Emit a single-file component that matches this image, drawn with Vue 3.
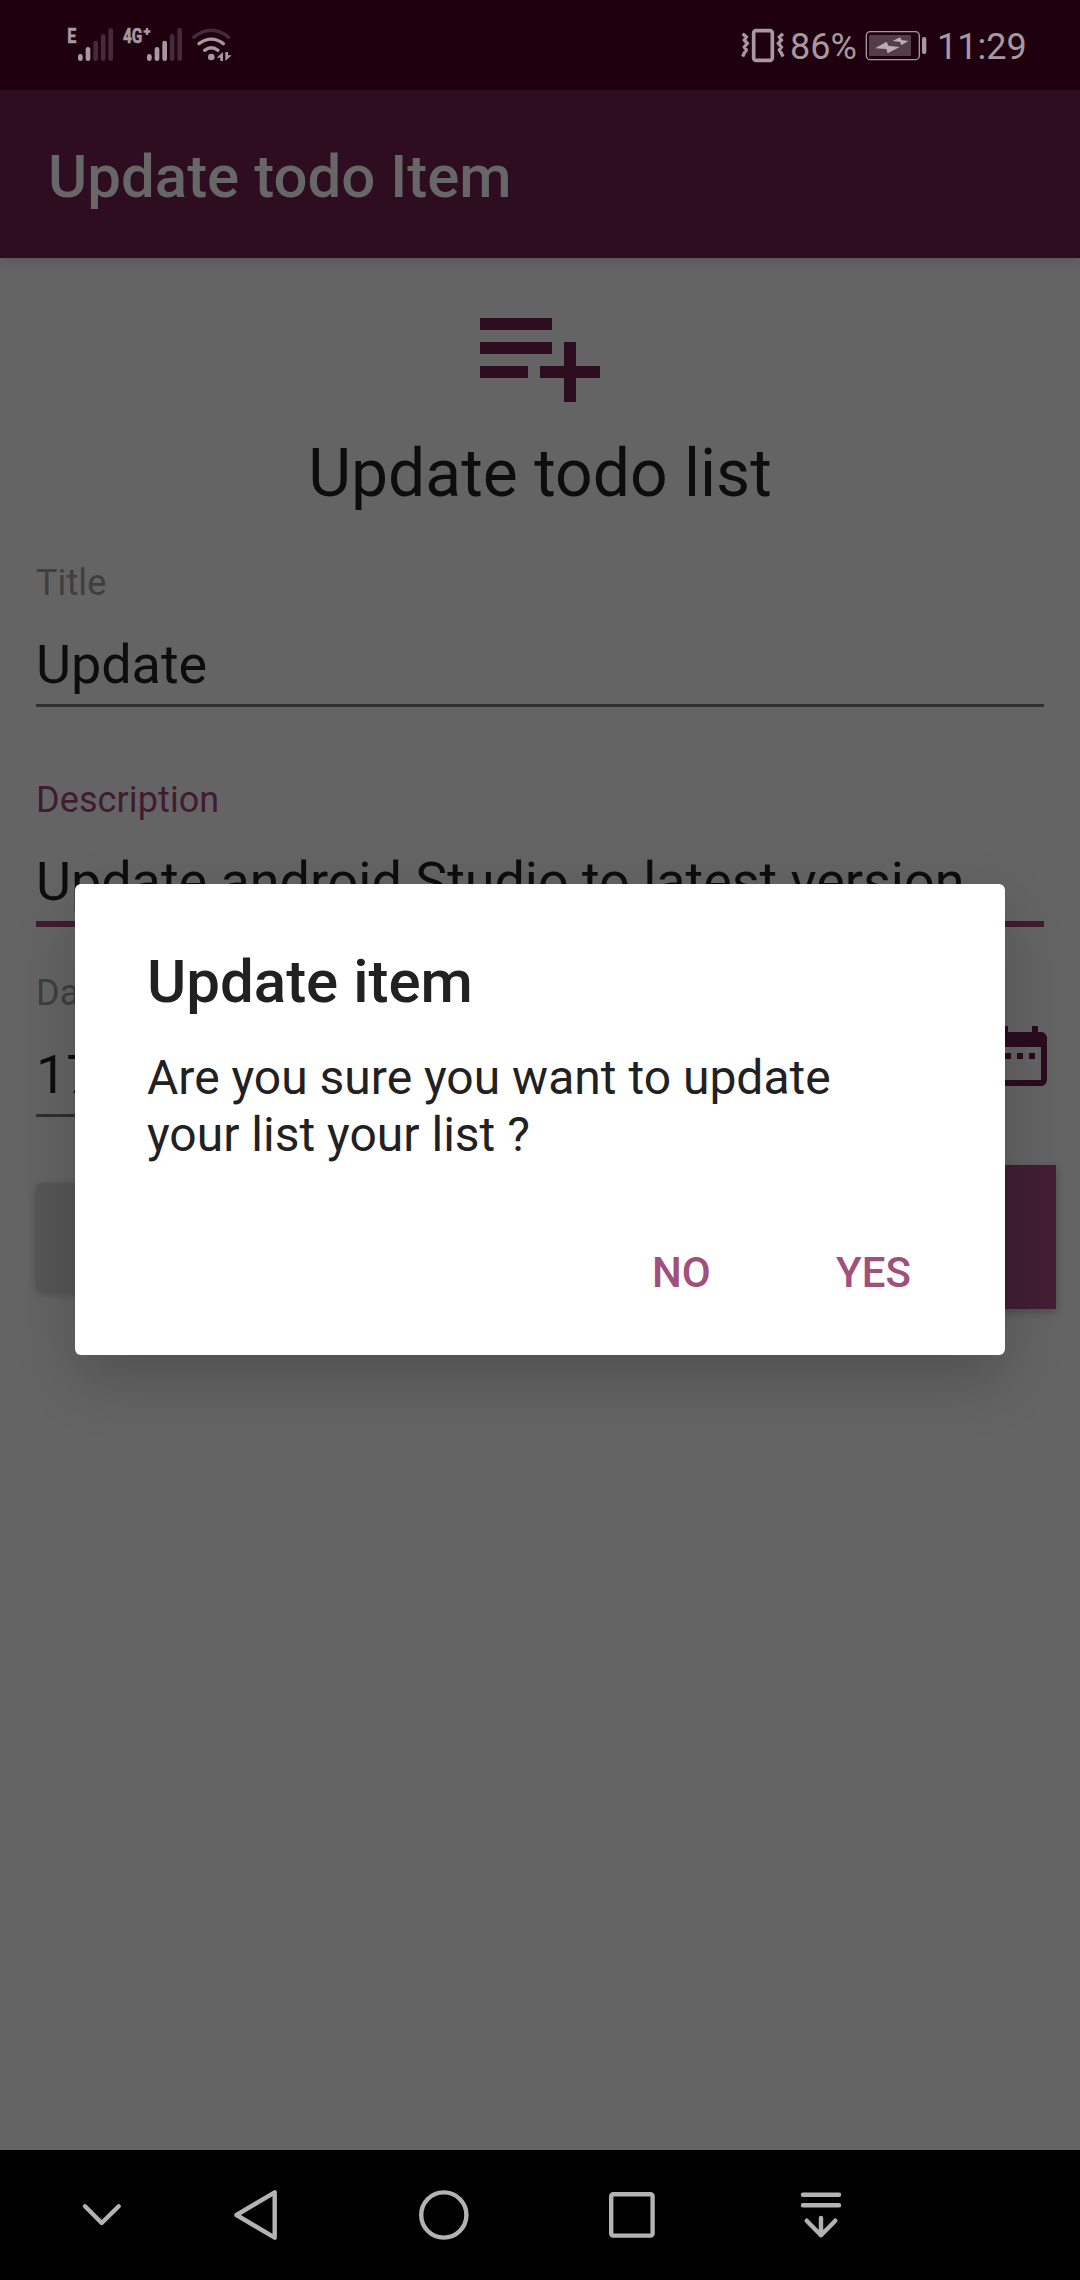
<script setup>
const fields = [
  { label: 'Title', value: 'Update', kind: 'first' },
  { label: 'Description', value: 'Update android Studio to latest version', kind: 'active' },
]
const firstBars = [
  { x: 91, top: 132, on: true },
  { x: 114, top: 111, on: true },
  { x: 137, top: 92, on: false },
  { x: 159.5, top: 72, on: false },
  { x: 182, top: 54, on: false },
]
const secondBars = [
  { x: 298, top: 132, on: true },
  { x: 321, top: 111, on: true },
  { x: 344, top: 92, on: true },
  { x: 366.5, top: 72, on: false },
  { x: 389, top: 54, on: false },
]
</script>

<template>
  <div class="screen">
    <header class="status">
      <svg class="sim-one" viewBox="48 45 144 114" width="48" height="38">
        <text x="52" y="99" class="net" textLength="27" lengthAdjust="spacingAndGlyphs">E</text>
        <rect v-for="b in firstBars" :key="b.x" :x="b.x - 7" :y="b.top" width="14" :height="153 - b.top" rx="7" :class="b.on ? 'lit' : 'unlit'" />
      </svg>
      <svg class="sim-two" viewBox="216 45 186 114" width="62" height="38">
        <text x="219" y="99" class="net" textLength="58" lengthAdjust="spacingAndGlyphs">4G</text>
        <path d="M291 54v21M280.500 64.500h21" class="plus" />
        <rect v-for="b in secondBars" :key="b.x" :x="b.x - 7" :y="b.top" width="14" :height="153 - b.top" rx="7" :class="b.on ? 'lit' : 'unlit'" />
      </svg>
      <svg class="wifi" viewBox="420 45 126 114" width="42" height="38">
        <path d="M431 82Q484 40 536 82" class="arc faint" />
        <path d="M447 101Q484 74 520 101" class="arc" />
        <path d="M464 121Q484 105 504 121" class="arc" />
        <circle cx="484" cy="141" r="10" class="lit" />
        <path d="M519 126v27h-8v-10h-11zM526 153v-27h8v10h11z" class="lit" />
      </svg>
      <span class="spacer"></span>
      <svg class="vibrate" viewBox="33 45 132 114" width="44" height="38">
        <rect x="71" y="62" width="56" height="89" rx="7" class="phone" />
        <path d="M38 71l11 10-6 9 9 10-9 11 6 9-6 9-5 11M159 71l-11 10 6 9-9 10 9 11-6 9 6 9 5 11" class="shake" />
      </svg>
      <span class="percent">86%</span>
      <svg class="battery" viewBox="405 45 186 114" width="62" height="38">
        <rect x="409" y="65" width="159" height="84" rx="12" class="cell" />
        <rect x="417" y="75" width="126" height="63" rx="4" class="charge" />
        <rect x="576" y="81" width="13" height="51" rx="6" class="lit" />
        <path d="M435 115l35-20 5 12 34 4-36 19-4-13zM488 93l22-11 5 8 20 3-21 13-4-10z" class="bolt" />
      </svg>
      <span class="clock">11:29</span>
    </header>

    <div class="appbar">Update todo Item</div>

    <main class="content">
      <svg class="list-icon" viewBox="0 0 24 24" width="144" height="144">
        <path d="M2 6h12v2H2zM2 10h12v2H2zM2 14h8v2H2zM16 10h2v4h4v2h-4v4h-2v-4h-4v-2h4z" />
      </svg>
      <h1>Update todo list</h1>

      <div v-for="f in fields" :key="f.label" class="field" :class="f.kind">
        <label>{{ f.label }}</label>
        <div class="value">{{ f.value }}</div>
      </div>

      <div class="date-row">
        <div class="field date">
          <label>Date</label>
          <div class="value">17</div>
        </div>
        <svg class="calendar" viewBox="0 0 24 24" width="72" height="72">
          <path d="M9 11H7v2h2zm4 0h-2v2h2zm4 0h-2v2h2zm2-7h-1V2h-2v2H8V2H6v2H5c-1.110 0-1.990.9-1.990 2L3 20a2 2 0 0 0 2 2h14c1.100 0 2-.9 2-2V6c0-1.100-.9-2-2-2m0 16H5V9h14z" />
        </svg>
      </div>

      <div class="buttons">
        <div class="btn plain"></div>
        <div class="btn primary"></div>
      </div>
    </main>

    <nav class="navbar">
      <svg class="n1" viewBox="0 0 60 60"><path d="M13 21.300L29.700 38 46.700 21.300" /></svg>
      <svg class="n2" viewBox="0 0 60 60"><path d="M10.500 30L48.700 7.300V52.700Z" /></svg>
      <svg class="n3" viewBox="0 0 60 60"><circle cx="29.800" cy="30" r="22.600" /></svg>
      <svg class="n4" viewBox="0 0 60 60"><rect x="9.200" y="9.200" width="41.400" height="41.400" rx="2" /></svg>
      <svg class="n5" viewBox="0 0 60 60"><path d="M12 9.700H48M12 20.300H48M30 33V50.300M15.700 35.700L30 50.300 44.300 35.700" /></svg>
    </nav>

    <section class="dialog">
      <h2>Update item</h2>
      <p>Are you sure you want to update your list your list ?</p>
      <div class="actions">
        <span class="no">NO</span>
        <span class="yes">YES</span>
      </div>
    </section>
  </div>
</template>

<style>
body {
  margin: 0;
  background: #646464;
}
</style>

<style scoped>
.screen {
  position: relative;
  display: flex;
  flex-direction: column;
  width: 1080px;
  height: 2280px;
  overflow: hidden;
  background: #646464;
  font-family: Roboto, "Noto Sans", sans-serif;
  color: #0d0d0d;
}
svg {
  display: block;
  flex: none;
}

/* status bar */
.status {
  display: flex;
  align-items: flex-start;
  box-sizing: border-box;
  height: 90px;
  flex: none;
  padding: 25px 53px 0 66px;
  background: #1e000f;
  color: #a898a0;
  font-size: 36px;
  line-height: 44px;
}
.sim-two { margin-left: 8px; }
.wifi { margin-left: 6px; }
.spacer { flex: 1; }
.percent { width: 75px; margin-left: 5px; }
.clock { width: 90px; margin-left: 10px; white-space: nowrap; }
.net { font-size: 62px; font-weight: 700; fill: #a898a0; stroke: #a898a0; stroke-width: 2; }
.lit { fill: #a898a0; }
.unlit { fill: #46293a; }
.plus { stroke: #a898a0; stroke-width: 7; fill: none; }
.arc { fill: none; stroke: #a898a0; stroke-width: 10; stroke-linecap: round; }
.faint { stroke: #46293a; }
.phone { fill: none; stroke: #a898a0; stroke-width: 11; }
.shake { fill: none; stroke: #a898a0; stroke-width: 10; }
.cell { fill: none; stroke: #a898a0; stroke-width: 4; }
.charge { fill: #543d49; }
.bolt { fill: #b9acb3; }

/* app bar */
.appbar {
  position: relative;
  flex: none;
  height: 168px;
  padding-left: 48px;
  background: #2e0d21;
  color: #676767;
  font-size: 60px;
  font-weight: 500;
  line-height: 173px;
  box-shadow: 0 4px 12px rgba(0, 0, 0, 0.12);
}

/* form */
.content {
  display: flex;
  flex-direction: column;
  flex: 1;
  padding: 24px 24px 0 36px;
}
.list-icon {
  margin-left: 432px;
  fill: #2e0d21;
}
h1 {
  width: 1008px;
  margin: 9px 0 0;
  font-size: 66px;
  font-weight: 400;
  line-height: 78px;
  text-align: center;
}
.field {
  width: 1008px;
}
.field label {
  display: block;
  height: 42px;
  font-size: 36px;
  line-height: 42px;
  letter-spacing: 0.1px;
  color: #3f3f3f;
}
.field .value {
  height: 63px;
  margin-top: 29px;
  padding-bottom: 8px;
  border-bottom: 3px solid #2f2f2f;
  font-size: 54px;
  line-height: 63px;
  letter-spacing: -0.06px;
  white-space: nowrap;
}
.field.first { margin-top: 49px; }
.field.active { margin-top: 72px; }
.field.active label { color: #401c31; }
.field.active .value { border-bottom: 6px solid #401c31; }
.date-row {
  display: flex;
  align-items: flex-start;
  margin-top: 45px;
}
.field.date { width: 900px; }
.calendar {
  margin: 48px 0 0 48px;
  fill: #2b0b1e;
}
.buttons {
  display: flex;
  align-items: center;
  justify-content: space-between;
  height: 144px;
  margin-top: 48px;
}
.btn.plain {
  width: 480px;
  height: 108px;
  border-radius: 6px;
  background: #565656;
  box-shadow: 0 3px 8px rgba(0, 0, 0, 0.22);
}
.btn.primary {
  width: 480px;
  height: 144px;
  background: #411e33;
  box-shadow: 0 3px 8px rgba(0, 0, 0, 0.25);
}

/* confirmation dialog */
.dialog {
  position: absolute;
  left: 75px;
  top: 884px;
  box-sizing: border-box;
  width: 930px;
  height: 471px;
  padding: 62px 72px 0;
  border-radius: 6px;
  background: #fff;
  color: #212121;
  box-shadow: 0 24px 60px rgba(0, 0, 0, 0.2);
}
h2 {
  margin: 0;
  font-size: 60px;
  font-weight: 500;
  line-height: 71px;
}
.dialog p {
  margin: 32px 0 0;
  font-size: 48px;
  line-height: 57px;
}
.actions {
  display: flex;
  margin-top: 85px;
  padding-left: 505px;
  color: #a14f7c;
  font-size: 42px;
  font-weight: 500;
  line-height: 50px;
}
.no { width: 184px; }

/* navigation bar */
.navbar {
  position: relative;
  display: flex;
  align-items: center;
  flex: none;
  height: 130px;
  padding-left: 72px;
  background: #000;
}
.navbar svg {
  width: 60px;
  height: 60px;
  fill: none;
  stroke: #b3b3b3;
  stroke-width: 4.4px;
  stroke-linecap: round;
  stroke-linejoin: round;
}
.navbar .n2 { margin-left: 94px; }
.navbar .n3, .navbar .n4 { margin-left: 128px; }
.navbar .n5 { margin-left: 129px; }
</style>
